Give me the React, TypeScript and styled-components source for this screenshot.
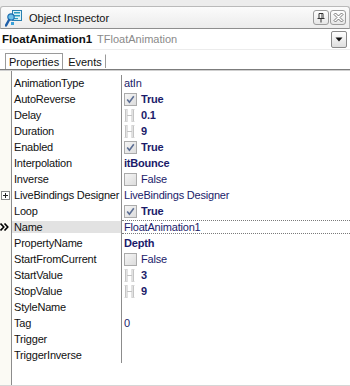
import React from 'react';
import styled, { createGlobalStyle } from 'styled-components';

const GlobalStyle = createGlobalStyle`
  html, body { margin: 0; padding: 0; background: #ffffff; }
  body { font-family: "Liberation Sans", Arial, sans-serif; font-size: 11px; color: #000; }
`;

const Window = styled.div`
  width: 350px;
  height: 386px;
  display: flex;
  flex-direction: column;
  overflow: hidden;
  background: #ffffff;
  box-sizing: border-box;
  border-bottom: 1px solid #d6d6d6;
`;

const TitleArea = styled.div`
  padding-top: 6px;
  background: #ececec;
`;

const TitleBar = styled.div`
  height: 21px;
  display: flex;
  align-items: center;
  padding: 0 3px 0 4px;
  border: 1px solid #b9b9b9;
  border-bottom-color: #8e8e8e;
  border-radius: 3px 3px 0 0;
  background: linear-gradient(#fbfbfb, #ececec);
  gap: 6px;
`;

const TitleText = styled.span`
  flex: 1;
  font-size: 11px;
  color: #111;
  padding-top: 1px;
`;

const TitleButton = styled.div`
  width: 14px;
  height: 13px;
  border: 1px solid #9c9c9c;
  border-radius: 3px;
  background: linear-gradient(#ffffff, #e6e6e6);
  display: flex;
  align-items: center;
  justify-content: center;
  margin-left: -5px;
`;

const ComboRow = styled.div`
  height: 20px;
  display: flex;
  align-items: center;
  padding: 0 3px 0 2px;
  border-bottom: 1px solid #ececec;
`;

const CompName = styled.span`
  font-weight: bold;
  font-size: 11.5px;
  color: #111;
`;

const CompType = styled.span`
  margin-left: 5px;
  color: #8a8a8a;
  flex: 1;
`;

const DropButton = styled.div`
  width: 14px;
  height: 15px;
  border: 1px solid #8a8a8a;
  border-radius: 2px;
  background: linear-gradient(#ffffff, #dedede);
  display: flex;
  align-items: center;
  justify-content: center;
`;

const TabStrip = styled.div`
  height: 19px;
  display: flex;
  align-items: flex-end;
  padding-left: 5px;
  border-bottom: 1px solid #7c7c7c;
  box-shadow: 0 1px 0 #cfcfcf;
`;

const Tab = styled.div<{ $active?: boolean }>`
  height: ${(p) => (p.$active ? '16px' : '14px')};
  display: flex;
  align-items: center;
  padding: 0 3px;
  font-size: 11px;
  color: #111;
  box-sizing: border-box;
  border: 1px solid ${(p) => (p.$active ? '#9a9a9a' : 'transparent')};
  border-bottom: none;
  border-right: 1px solid #9a9a9a;
  background: #fff;
  margin-right: ${(p) => (p.$active ? '1px' : '0')};
  margin-bottom: ${(p) => (p.$active ? '0' : '1px')};
`;

const Body = styled.div`
  flex: 1;
  padding-top: 4px;
  margin-top: 1px;
  letter-spacing: -0.2px;
  background: linear-gradient(
    to right,
    #fbfaf4 0,
    #fbfaf4 11px,
    #8c8c8c 11px,
    #8c8c8c 12px,
    #ffffff 12px
  );
`;

const Row = styled.div`
  display: grid;
  grid-template-columns: 12px 109px 1fr;
  height: 16px;
`;

const Gutter = styled.div`
  display: flex;
  align-items: center;
  justify-content: flex-start;
`;

const NameCell = styled.div<{ $selected?: boolean }>`
  display: flex;
  align-items: center;
  padding-left: 2px;
  white-space: nowrap;
  color: #111;
  background: ${(p) => (p.$selected ? '#e2e2e2' : 'transparent')};
  margin: ${(p) => (p.$selected ? '2px 0 2px 0' : '0')};
`;

const ValueCell = styled.div`
  display: flex;
  align-items: center;
  padding-left: 2px;
  border-left: 1px solid #8c8c8c;
  white-space: nowrap;
  overflow: hidden;
`;

const ValueInner = styled.div<{ $selected?: boolean }>`
  flex: 1;
  align-self: stretch;
  display: flex;
  align-items: center;
  gap: 4px;
  margin: ${(p) => (p.$selected ? '1px 0 1px -2px' : '0')};
  padding-left: ${(p) => (p.$selected ? '2px' : '0')};
  border-top: ${(p) => (p.$selected ? '1px dotted #7a7a7a' : 'none')};
  border-bottom: ${(p) => (p.$selected ? '1px dotted #7a7a7a' : 'none')};
`;

const ValueText = styled.span<{ $bold?: boolean }>`
  color: #1b1b6a;
  font-weight: ${(p) => (p.$bold ? 'bold' : 'normal')};
`;

const CheckBox = styled.div`
  width: 11px;
  height: 11px;
  border: 1px solid #ababab;
  background: linear-gradient(135deg, #f6f6f6, #dcdcdc);
  display: flex;
  align-items: center;
  justify-content: center;
  flex: none;
`;

const ExpandBox = styled.div`
  width: 7px;
  height: 7px;
  border: 1px solid #8a8a8a;
  background: #fff;
  margin-left: 1px;
  display: flex;
  align-items: center;
  justify-content: center;
`;

type Prop = {
  name: string;
  value?: string;
  kind?: 'check' | 'spin' | 'text';
  checked?: boolean;
  bold?: boolean;
  expand?: boolean;
  selected?: boolean;
};

const props: Prop[] = [
  { name: 'AnimationType', value: 'atIn' },
  { name: 'AutoReverse', kind: 'check', checked: true, value: 'True', bold: true },
  { name: 'Delay', kind: 'spin', value: '0.1', bold: true },
  { name: 'Duration', kind: 'spin', value: '9', bold: true },
  { name: 'Enabled', kind: 'check', checked: true, value: 'True', bold: true },
  { name: 'Interpolation', value: 'itBounce', bold: true },
  { name: 'Inverse', kind: 'check', checked: false, value: 'False' },
  { name: 'LiveBindings Designer', value: 'LiveBindings Designer', expand: true },
  { name: 'Loop', kind: 'check', checked: true, value: 'True', bold: true },
  { name: 'Name', value: 'FloatAnimation1', selected: true },
  { name: 'PropertyName', value: 'Depth', bold: true },
  { name: 'StartFromCurrent', kind: 'check', checked: false, value: 'False' },
  { name: 'StartValue', kind: 'spin', value: '3', bold: true },
  { name: 'StopValue', kind: 'spin', value: '9', bold: true },
  { name: 'StyleName', value: '' },
  { name: 'Tag', value: '0' },
  { name: 'Trigger', value: '' },
  { name: 'TriggerInverse', value: '' },
];

const InspectorIcon = () => (
  <svg width="18" height="18" viewBox="0 0 18 18">
    <rect x="7.5" y="1.5" width="9" height="10" fill="#dff3f6" stroke="#2a7fb0" />
    <rect x="9" y="3" width="6" height="1.5" fill="#2a9cc0" />
    <rect x="9" y="6" width="6" height="1.5" fill="#2a9cc0" />
    <rect x="9" y="9" width="4" height="1.2" fill="#2a9cc0" />
    <circle cx="6" cy="8" r="3.2" fill="#6fc2e8" stroke="#1f6fb2" strokeWidth="1.2" />
    <path d="M4 11 L1 16.5" stroke="#1f5fa8" strokeWidth="2.4" strokeLinecap="round" />
    <rect x="6" y="13" width="3" height="3" fill="#3aa0d8" />
  </svg>
);

const PinIcon = () => (
  <svg width="10" height="11" viewBox="0 0 10 11">
    <path d="M3 1.5 H7 V6.5 H3 Z" fill="none" stroke="#333" />
    <path d="M1.5 6.5 H8.5" stroke="#333" />
    <path d="M5 6.5 V10.5" stroke="#333" />
    <path d="M5.5 2 V6" stroke="#999" />
  </svg>
);

const CloseIcon = () => (
  <svg width="11" height="11" viewBox="0 0 11 11">
    <path
      d="M1 2.5 L2.5 1 L5.5 4 L8.5 1 L10 2.5 L7 5.5 L10 8.5 L8.5 10 L5.5 7 L2.5 10 L1 8.5 L4 5.5 Z"
      fill="#fff"
      stroke="#555"
      strokeWidth="0.8"
    />
  </svg>
);

const DownTriangle = () => (
  <svg width="8" height="5" viewBox="0 0 8 5">
    <path d="M0.5 0.5 H7.5 L4 4.5 Z" fill="#111" />
  </svg>
);

const CheckMark = () => (
  <svg width="9" height="9" viewBox="0 0 9 9">
    <path d="M1.2 4.6 L3.4 7.2 L7.8 1.2" fill="none" stroke="#5b6d93" strokeWidth="1.6" />
  </svg>
);

const SpinIcon = () => (
  <svg width="11" height="13" viewBox="0 0 11 13" style={{ flex: 'none', marginRight: 2 }}>
    <path d="M1.5 0.5 V12.5 M3 0.5 V12.5 M8 0.5 V12.5 M9.5 0.5 V12.5" stroke="#c4c4c4" />
    <path d="M3 6.5 H8" stroke="#c4c4c4" />
    <path d="M0.5 0.5 H3.5 M0.5 12.5 H3.5 M7.5 0.5 H10.5 M7.5 12.5 H10.5" stroke="#d4d4d4" />
  </svg>
);

const SelectedArrow = () => (
  <svg width="10" height="8" viewBox="0 0 10 8">
    <path d="M0.5 0.5 L3.8 4 L0.5 7.5 M4.5 0.5 L7.8 4 L4.5 7.5" fill="none" stroke="#000" strokeWidth="1.6" />
  </svg>
);

const PlusIcon = () => (
  <svg width="5" height="5" viewBox="0 0 5 5">
    <path d="M0 2.5 H5 M2.5 0 V5" stroke="#222" />
  </svg>
);

const PropertyRow = ({ p }: { p: Prop }) => (
  <Row>
    <Gutter>
      {p.expand && (
        <ExpandBox>
          <PlusIcon />
        </ExpandBox>
      )}
      {p.selected && <SelectedArrow />}
    </Gutter>
    <NameCell $selected={p.selected}>{p.name}</NameCell>
    <ValueCell>
      <ValueInner $selected={p.selected}>
        {p.kind === 'check' && <CheckBox>{p.checked && <CheckMark />}</CheckBox>}
        {p.kind === 'spin' && <SpinIcon />}
        {p.value ? <ValueText $bold={p.bold}>{p.value}</ValueText> : null}
      </ValueInner>
    </ValueCell>
  </Row>
);

export default function App() {
  return (
    <>
      <GlobalStyle />
      <Window>
        <TitleArea>
          <TitleBar>
            <InspectorIcon />
            <TitleText>Object Inspector</TitleText>
            <TitleButton>
              <PinIcon />
            </TitleButton>
            <TitleButton>
              <CloseIcon />
            </TitleButton>
          </TitleBar>
        </TitleArea>
        <ComboRow>
          <CompName>FloatAnimation1</CompName>
          <CompType>TFloatAnimation</CompType>
          <DropButton>
            <DownTriangle />
          </DropButton>
        </ComboRow>
        <TabStrip>
          <Tab $active>Properties</Tab>
          <Tab>Events</Tab>
        </TabStrip>
        <Body>
          {props.map((p) => (
            <PropertyRow key={p.name} p={p} />
          ))}
        </Body>
      </Window>
    </>
  );
}
